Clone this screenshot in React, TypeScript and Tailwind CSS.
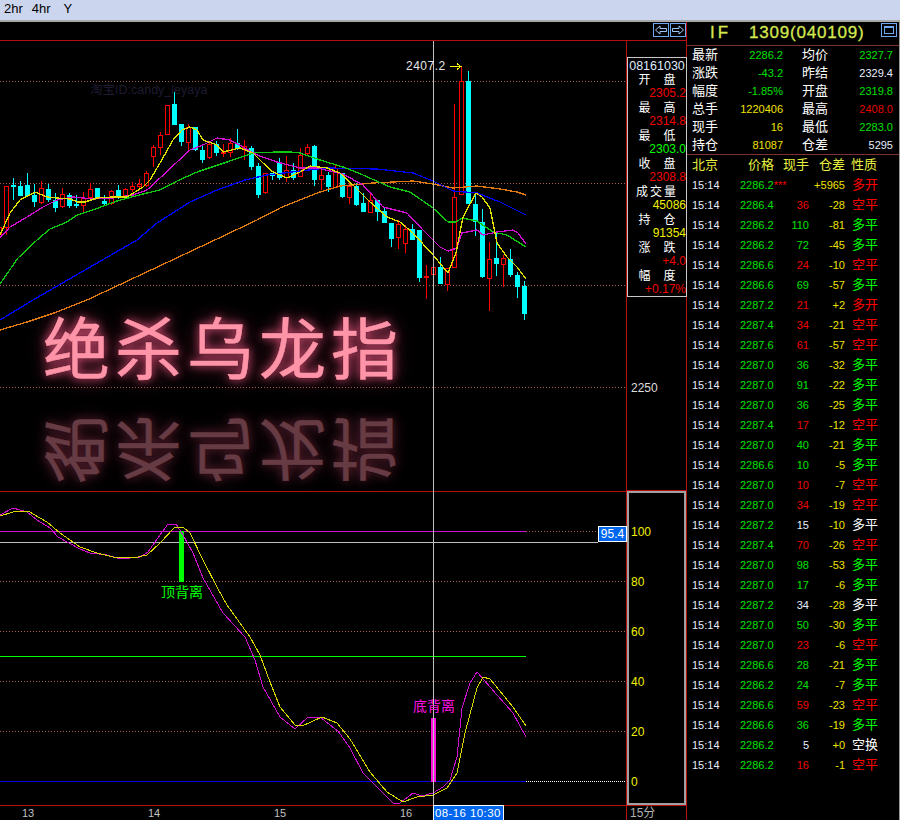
type Candle = [number, number, number, number, number];

const C = 0;
const R = 1;

// kind, body top, body bottom, wick top, wick bottom (x = 7 * index - 1)
const candles: Candle[] = [
  [R, 227, 235, 227, 235],
  [R, 186, 228, 186, 235],
  [C, 185, 187, 178, 200],
  [C, 186, 196, 181, 196],
  [C, 185, 196, 173, 197],
  [C, 195, 202, 184, 207],
  [R, 188, 203, 181, 204],
  [C, 189, 200, 184, 202],
  [C, 200, 208, 193, 212],
  [R, 194, 207, 188, 208],
  [C, 195, 206, 193, 208],
  [C, 204, 206, 195, 208],
  [R, 198, 206, 192, 213],
  [R, 189, 198, 183, 199],
  [C, 188, 198, 188, 199],
  [C, 201, 204, 195, 206],
  [R, 191, 204, 190, 205],
  [C, 190, 198, 185, 199],
  [R, 189, 196, 188, 198],
  [R, 186, 190, 182, 192],
  [R, 184, 187, 179, 188],
  [R, 173, 186, 171, 187],
  [R, 147, 157, 145, 167],
  [R, 135, 148, 132, 155],
  [R, 105, 135, 105, 135],
  [C, 104, 125, 92, 125],
  [C, 124, 142, 124, 146],
  [R, 127, 143, 124, 151],
  [C, 127, 150, 127, 151],
  [C, 150, 160, 146, 163],
  [R, 144, 158, 142, 159],
  [C, 144, 153, 141, 156],
  [R, 152, 154, 144, 157],
  [R, 143, 153, 138, 157],
  [C, 143, 148, 129, 150],
  [R, 146, 149, 140, 160],
  [C, 148, 167, 146, 170],
  [C, 166, 195, 163, 198],
  [R, 173, 193, 173, 194],
  [C, 173, 176, 173, 180],
  [C, 163, 178, 158, 180],
  [R, 170, 178, 156, 182],
  [C, 170, 178, 163, 180],
  [R, 155, 177, 148, 177],
  [R, 147, 154, 144, 155],
  [C, 146, 180, 145, 186],
  [R, 175, 180, 170, 190],
  [C, 175, 187, 172, 192],
  [R, 168, 188, 165, 188],
  [C, 173, 197, 173, 198],
  [R, 186, 198, 183, 204],
  [C, 186, 205, 183, 206],
  [C, 203, 212, 193, 212],
  [R, 200, 213, 193, 213],
  [C, 200, 212, 200, 221],
  [C, 211, 223, 207, 223],
  [C, 223, 239, 223, 247],
  [R, 224, 238, 220, 249],
  [R, 229, 244, 225, 253],
  [C, 229, 240, 224, 240],
  [C, 230, 278, 230, 282],
  [R, 276, 278, 265, 299],
  [R, 267, 275, 267, 275],
  [C, 267, 284, 257, 284],
  [R, 268, 285, 268, 291],
  [R, 197, 268, 104, 268],
  [R, 81, 195, 67, 195],
  [C, 81, 204, 71, 204],
  [C, 204, 222, 195, 236],
  [C, 222, 277, 209, 278],
  [R, 259, 279, 242, 311],
  [C, 258, 264, 233, 276],
  [R, 258, 265, 255, 287],
  [C, 259, 275, 249, 277],
  [C, 275, 287, 272, 298],
  [C, 286, 314, 281, 320],
];

const ma5 =
  "0,235 10,213 20,200 35,192 47,197 57,198 70,199 78,202 85,202 97,198 112,197 127,197 143,187 150,180 160,163 173,140 182,130 190,127 197,130 203,140 217,145 223,152 240,148 253,153 263,163 273,172 287,178 300,172 310,166 327,168 340,173 353,185 370,202 387,217 400,222 413,233 433,255 448,273 456,253 461,227 463,217 476,193 482,197 490,208 497,243 507,257 517,267 526,279";
const ma10 =
  "0,238 10,227 27,217 43,207 57,200 73,197 93,199 113,198 133,195 147,190 160,178 177,162 190,150 203,145 217,138 230,140 243,147 257,155 277,162 300,168 317,168 343,174 363,185 383,207 407,213 423,230 440,247 448,251 457,248 462,233 477,230 483,235 497,232 513,230 518,233 526,244";
const ma20 =
  "0,284 18,258 37,240 50,229 67,222 77,215 93,210 117,201 143,194 160,190 177,181 197,172 227,162 253,153 277,152 290,152 300,153 320,160 343,167 363,175 390,187 410,192 433,208 448,222 456,222 462,218 477,221 493,232 507,235 526,247";
const ma30 =
  "0,320 33,300 137,240 157,223 190,202 217,190 245,180 267,175 300,171 327,168 377,169 413,173 433,181 453,191 477,193 500,202 526,215";
const ma60 =
  "0,330 27,322 57,312 87,300 217,239 257,220 280,208 300,200 320,192 340,186 373,183 413,181 433,184 453,188 477,186 500,189 517,192 526,195";
const kdjK =
  "0,515 13,508 27,512 37,520 50,528 58,537 80,549 90,553 107,555 120,559 140,557 148,552 160,535 168,524 176,524 183,535 193,553 203,578 223,613 245,637 255,660 263,687 280,717 295,729 308,717 320,717 330,725 338,731 350,748 363,773 393,803 400,803 413,793 422,796 433,793 443,787 450,780 457,757 462,708 470,683 477,672 497,695 513,713 526,737";
const kdjD =
  "0,516 13,512 28,511 47,522 60,533 80,547 97,553 113,557 133,558 147,555 160,543 175,527 183,527 190,533 203,560 217,587 227,605 250,637 260,655 270,682 280,707 295,725 302,726 322,717 337,723 350,739 370,772 387,792 403,802 417,797 433,795 447,788 457,773 465,733 477,688 483,677 490,679 513,707 526,726";

const stats = [
  ["最新", "2286.2", "text-[#00e000]", "均价", "2327.7", "text-[#00e000]"],
  ["涨跌", "-43.2", "text-[#00e000]", "昨结", "2329.4", "text-[#e8eeff]"],
  ["幅度", "-1.85%", "text-[#00e000]", "开盘", "2319.8", "text-[#00e000]"],
  ["总手", "1220406", "text-[#f0e000]", "最高", "2408.0", "text-[#e00000]"],
  ["现手", "16", "text-[#f0e000]", "最低", "2283.0", "text-[#00e000]"],
  ["持仓", "81087", "text-[#f0e000]", "仓差", "5295", "text-[#e8eeff]"],
];

const UP = "text-[#f00000]";
const DN = "text-[#00e000]";
const WH = "text-[#e8eeff]";

const trades: [string, string, string, string, string, string][] = [
  ["2286.2", "", UP, "+5965", "多开", "text-[#ff0000]"],
  ["2286.4", "36", UP, "-28", "空平", "text-[#ff0000]"],
  ["2286.2", "110", DN, "-81", "多平", "text-[#00ff00]"],
  ["2286.2", "72", DN, "-45", "多平", "text-[#00ff00]"],
  ["2286.6", "24", UP, "-10", "空平", "text-[#ff0000]"],
  ["2286.6", "69", DN, "-57", "多平", "text-[#00ff00]"],
  ["2287.2", "21", UP, "+2", "多开", "text-[#ff0000]"],
  ["2287.4", "34", UP, "-21", "空平", "text-[#ff0000]"],
  ["2287.6", "61", UP, "-57", "空平", "text-[#ff0000]"],
  ["2287.0", "36", DN, "-32", "多平", "text-[#00ff00]"],
  ["2287.0", "91", DN, "-22", "多平", "text-[#00ff00]"],
  ["2287.0", "36", DN, "-25", "多平", "text-[#00ff00]"],
  ["2287.4", "17", UP, "-12", "空平", "text-[#ff0000]"],
  ["2287.0", "40", DN, "-21", "多平", "text-[#00ff00]"],
  ["2286.6", "10", DN, "-5", "多平", "text-[#00ff00]"],
  ["2287.0", "10", UP, "-7", "空平", "text-[#ff0000]"],
  ["2287.0", "34", UP, "-19", "空平", "text-[#ff0000]"],
  ["2287.2", "15", WH, "-10", "多平", "text-white"],
  ["2287.4", "70", UP, "-26", "空平", "text-[#ff0000]"],
  ["2287.0", "98", DN, "-53", "多平", "text-[#00ff00]"],
  ["2287.0", "17", DN, "-6", "多平", "text-[#00ff00]"],
  ["2287.2", "34", WH, "-28", "多平", "text-white"],
  ["2287.0", "50", DN, "-30", "多平", "text-[#00ff00]"],
  ["2287.0", "23", UP, "-6", "空平", "text-[#ff0000]"],
  ["2286.6", "28", DN, "-21", "多平", "text-[#00ff00]"],
  ["2286.2", "24", DN, "-7", "多平", "text-[#00ff00]"],
  ["2286.6", "59", UP, "-23", "空平", "text-[#ff0000]"],
  ["2286.6", "36", DN, "-19", "多平", "text-[#00ff00]"],
  ["2286.2", "5", WH, "+0", "空换", "text-white"],
  ["2286.2", "16", UP, "-1", "空平", "text-[#ff0000]"],
];

const quote = [
  ["开", "盘", "2305.2", "text-[#f00000]"],
  ["最", "高", "2314.8", "text-[#f00000]"],
  ["最", "低", "2303.0", "text-[#00ff00]"],
  ["收", "盘", "2308.8", "text-[#f00000]"],
  ["成交量", "", "45086", "text-[#f0f000]"],
  ["持", "仓", "91354", "text-[#f0f000]"],
  ["涨", "跌", "+4.0", "text-[#f00000]"],
  ["幅", "度", "+0.17%", "text-[#f00000]"],
];

const NavButton = ({ flip }: { flip?: boolean }) => (
  <div className="w-4 h-[14px] border border-[#6ea8f0]">
    <svg viewBox="0 0 14 12" className="w-full h-full block">
      <path
        d={flip ? "M1.5 4.5H8V2L12.5 6 8 10V7.5H1.5Z" : "M12.5 4.5H6V2L1.5 6 6 10V7.5H12.5Z"}
        fill="none"
        stroke="#9cc8f8"
      />
    </svg>
  </div>
);

const ChartDrawing = () => (
  <svg viewBox="0 41 626 779" className="block w-[626px] h-[779px]">
    <g shapeRendering="crispEdges" fill="none">
      {[81, 183, 285, 387, 581, 631, 681, 731].map((y) => (
        <line key={y} x1="0" x2="626" y1={y + 0.5} y2={y + 0.5} stroke="#b06050" strokeDasharray="1 2" />
      ))}
      <line x1="526" x2="598" y1="531.5" y2="531.5" stroke="#b06050" strokeDasharray="1 2" />
      <line x1="526" x2="626" y1="781.5" y2="781.5" stroke="#ffffff" strokeDasharray="1 1" />

      {candles.map(([kind, top, bottom, wickTop, wickBottom], i) => {
        const x = 7 * i - 1;
        const color = kind === R ? "#ff0000" : "#00ffff";
        return (
          <g key={i}>
            <line x1={x + 0.5} x2={x + 0.5} y1={wickTop} y2={wickBottom} stroke={color} />
            {kind === R ? (
              <rect x={x - 1.5} y={top + 0.5} width="4" height={bottom - top - 1} fill="#000" stroke={color} />
            ) : (
              <rect x={x - 2} y={top} width="5" height={bottom - top} fill={color} />
            )}
          </g>
        );
      })}

      <g strokeWidth="1.3">
        <polyline points={ma60} stroke="#e07810" />
        <polyline points={ma30} stroke="#0000ff" />
        <polyline points={ma20} stroke="#10c810" />
        <polyline points={ma10} stroke="#d010d0" />
        <polyline points={ma5} stroke="#e0e000" />
      </g>

      <line x1="0" x2="626" y1="491.5" y2="491.5" stroke="#b81010" />
      <line x1="0" x2="526" y1="531.5" y2="531.5" stroke="#d010d0" />
      <line x1="0" x2="598" y1="542.5" y2="542.5" stroke="#c0c0c0" />
      <line x1="0" x2="526" y1="656.5" y2="656.5" stroke="#00ff00" />
      <line x1="0" x2="526" y1="781.5" y2="781.5" stroke="#0000e0" />

      <rect x="179" y="531" width="5" height="51" fill="#00ff00" />
      <rect x="431" y="718" width="5" height="64" fill="#ff10e0" />

      <polyline points={kdjK} stroke="#d010d0" />
      <polyline points={kdjD} stroke="#d8d800" />

      <line x1="433.5" x2="433.5" y1="41" y2="805" stroke="#c0c0c0" />
      <line x1="0" x2="626" y1="805.5" y2="805.5" stroke="#b81010" />
      <path d="M450 66.5H460M457 63.5L461 66.5L457 69.5" stroke="#ffff00" />
      <rect x="433.5" y="805.5" width="70" height="15" fill="#0066ee" stroke="#ffffff" />
    </g>

    <g fontSize="11">
      <text x="406" y="70" fontSize="12" letterSpacing="0.5" fill="#e8e8e8">2407.2</text>
      <text x="90" y="94" fontSize="12.5" fill="#1e1a30">淘宝ID:candy_leyaya</text>
      <text x="161" y="597" fontSize="14" fill="#00ff00">顶背离</text>
      <text x="413" y="711" fontSize="14" fill="#ff10e0">底背离</text>
      <text x="22" y="817" fill="#c0c0c0">13</text>
      <text x="148" y="817" fill="#c0c0c0">14</text>
      <text x="274" y="817" fill="#c0c0c0">15</text>
      <text x="400" y="817" fill="#c0c0c0">16</text>
      <text x="435" y="817" fontSize="11.5" letterSpacing="0.4" fill="#ffffff">08-16 10:30</text>
    </g>
  </svg>
);

const App = () => {
  return (
    <div className="w-[900px] h-[820px] flex flex-col overflow-hidden bg-black [font-family:'Liberation_Sans','Noto_Sans_CJK_SC',sans-serif]">
      <div className="h-[22px] shrink-0 flex items-start gap-[9px] pl-1 pt-px bg-[#ccd5ee] border-b-2 border-[#a8a8a8] text-[13px] leading-[16px] text-black">
        <span>2hr</span>
        <span>4hr</span>
        <span className="ml-1">Y</span>
      </div>

      <div className="flex flex-1 min-h-0">
        <div className="w-[687px] shrink-0 flex flex-col border-r border-[#b81010]">
          <div className="h-[19px] shrink-0 flex justify-end gap-px pt-px border-b border-[#b81010]">
            <NavButton />
            <NavButton flip />
          </div>

          <div className="flex flex-1 min-h-0">
            <div className="relative w-[626px] shrink-0">
              <ChartDrawing />
              <div className="absolute left-[43px] top-[265px] text-[67px] tracking-[5px] leading-[90px] whitespace-nowrap text-[#ff93a8] [-webkit-text-stroke:0.6px_#ff93a8] [text-shadow:0_0_1px_#3a1018,0_0_2px_#4a1824,0_0_9px_#e0507a,0_0_18px_#b03a5c]">
                绝杀乌龙指
              </div>
              <div className="absolute left-[43px] top-[361px] text-[67px] tracking-[5px] leading-[90px] whitespace-nowrap text-[#ff93a8] opacity-40 -scale-y-100 [-webkit-text-stroke:0.6px_#ff93a8] [text-shadow:0_0_1px_#3a1018,0_0_2px_#4a1824,0_0_9px_#e0507a,0_0_18px_#b03a5c]">
                绝杀乌龙指
              </div>
              <div className="absolute left-[598px] top-[485px] w-[29px] h-[16px] border border-white bg-[#0066ee] text-center text-[12px] leading-[14px] text-white">
                95.4
              </div>
            </div>

            <div className="flex-1 min-w-0 flex flex-col border-l border-[#b81010]">
              <div className="h-[450px] shrink-0 pt-4 border-b border-[#b81010]">
                <div className="relative w-[60px] h-[240px] border border-[#c8c8c8] bg-black text-[12px] leading-[13px] text-white">
                  <div className="h-4 text-center text-[12.5px] leading-[16px] text-[#dfeaff]">08161030</div>
                  {quote.map(([a, b, value, color]) => (
                    <div key={a + value} className="h-[28px]">
                      <div className={b ? "h-[13px] flex justify-between w-[37px] mx-auto" : "h-[13px] flex justify-center"}>
                        <span className={b ? "" : "tracking-[2px]"}>{a}</span>
                        {b && <span>{b}</span>}
                      </div>
                      <div className={`h-[15px] text-right text-[12px] leading-[13px] ${color}`}>{value}</div>
                    </div>
                  ))}
                </div>
                <div className="pl-1 mt-[84px] text-[12px] leading-[14px] text-[#dddddd]">2250</div>
              </div>

              <div className="flex-1 min-h-0 flex flex-col pt-[14px] pl-[2px] border-2 border-[#a0a0a0] text-[12px] text-[#f0f000]">
                {["100", "80", "60", "40", "20", "0"].map((n) => (
                  <div key={n} className="h-[50px] shrink-0 flex items-center">{n}</div>
                ))}
              </div>

              <div className="h-[15px] shrink-0 pl-[3px] border-t border-[#b81010] text-[12px] leading-[15px] text-[#b0b0b0]">15分</div>
            </div>
          </div>
        </div>

        <div className="flex-1 min-w-0 flex flex-col border-r border-[#999999]">
          <div className="h-[24px] shrink-0 flex items-start pl-[23px] border-b border-[#803030] text-[17px] leading-[22px] text-[#d4e850] [-webkit-text-stroke:0.3px_#d4e850]">
            <span className="w-[39px] tracking-[3px]">IF</span>
            <span className="tracking-[0.8px]">1309(040109)</span>
            <div className="ml-auto mt-px mr-[2px] w-4 h-[14px] border border-[#6ea8f0] p-[2px]">
              <div className="w-full h-full border border-[#6ea8f0] border-t-2" />
            </div>
          </div>

          <div className="h-[109px] shrink-0 border-b border-[#803030] text-[11px]">
            {stats.map(([l1, v1, c1, l2, v2, c2]) => (
              <div key={l1} className="h-[18px] flex items-center pl-[5px]">
                <span className="w-[26px] text-[13px] text-white">{l1}</span>
                <span className={`w-[65px] text-right ${c1}`}>{v1}</span>
                <span className="ml-[19px] w-[26px] text-[13px] text-white">{l2}</span>
                <span className={`w-[65px] text-right ${c2}`}>{v2}</span>
              </div>
            ))}
          </div>

          <div className="h-5 shrink-0 flex items-center pl-[5px] text-[13px] text-[#e8f040]">
            <span className="w-[56px]">北京</span>
            <span className="w-[35px]">价格</span>
            <span className="w-[36px]">现手</span>
            <span className="w-[32px]">仓差</span>
            <span>性质</span>
          </div>

          <div className="flex flex-col text-[11px]">
            {trades.map(([price, vol, volColor, diff, kind, kindColor], i) => (
              <div key={i} className="h-5 flex items-center pl-[5px]">
                <span className="w-[48px] text-[#e8eeff]">15:14</span>
                <span className="w-[46px] text-[#00e000] whitespace-nowrap">
                  {price}
                  {i === 0 && <span className="text-[#f00000]">***</span>}
                </span>
                <span className={`w-[23px] text-right ${volColor}`}>{vol}</span>
                <span className="w-[36px] text-right text-[#f0e000]">{diff}</span>
                <span className={`ml-[7px] text-[13px] ${kindColor}`}>{kind}</span>
              </div>
            ))}
          </div>
        </div>
      </div>
    </div>
  );
};

export default App;
